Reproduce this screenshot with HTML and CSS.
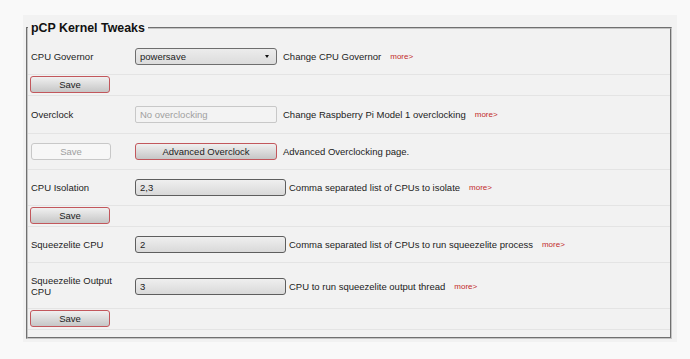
FILE: index.html
```html
<!DOCTYPE html>
<html>
	<head>
		<meta charset="UTF-8">
		<title>pCP Kernel Tweaks</title>
		<link rel="stylesheet" href="styles.css">
	</head>
	<body>
		<div class="panel">
			<fieldset class="tweaks">
				<legend>pCP Kernel Tweaks</legend>

				<div class="row">
					<div class="label">CPU Governor</div>
					<div class="select"><span>powersave</span><i class="arrow"></i></div>
					<span class="desc">Change CPU Governor</span>
					<a class="more" href="###">more&gt;</a>
				</div>
				<div class="row row-save">
					<button class="btn">Save</button>
				</div>

				<div class="row row-mid">
					<div class="label">Overclock</div>
					<input class="txt txt-short" type="text" value="No overclocking" disabled>
					<span class="desc">Change Raspberry Pi Model 1 overclocking</span>
					<a class="more" href="###">more&gt;</a>
				</div>
				<div class="row">
					<div class="label"><button class="btn" disabled>Save</button></div>
					<button class="btn btn-wide">Advanced Overclock</button>
					<span class="desc">Advanced Overclocking page.</span>
				</div>

				<div class="row">
					<div class="label">CPU Isolation</div>
					<input class="txt" type="text" value="2,3">
					<span class="desc">Comma separated list of CPUs to isolate</span>
					<a class="more" href="###">more&gt;</a>
				</div>
				<div class="row row-save">
					<button class="btn">Save</button>
				</div>

				<div class="row">
					<div class="label">Squeezelite CPU</div>
					<input class="txt" type="text" value="2">
					<span class="desc">Comma separated list of CPUs to run squeezelite process</span>
					<a class="more" href="###">more&gt;</a>
				</div>
				<div class="row row-tall">
					<div class="label">Squeezelite Output CPU</div>
					<input class="txt" type="text" value="3">
					<span class="desc">CPU to run squeezelite output thread</span>
					<a class="more" href="###">more&gt;</a>
				</div>
				<div class="row row-save">
					<button class="btn">Save</button>
				</div>
			</fieldset>
		</div>
	</body>
</html>
```

FILE: styles.css
```css
*{
	margin: 0;
	padding: 0;
	box-sizing: border-box;
}
body{
	background-color: #f9f9f9;
	font-family: "Liberation Sans", Arial, sans-serif;
	font-size: 9.5px;
	color: #222;
	padding: 15px 0 0 23px;
}
.panel{
	width: 654px;
	background-color: #f2f2f2;
	padding: 6px 5px 3px 3px;
}
.tweaks{
	border: 2px groove #c4c4c4;
	padding: 4px 0 7px 0;
}
.tweaks legend{
	font-size: 12.4px;
	font-weight: bold;
	color: #111;
	padding: 0 3px;
	line-height: 14px;
}
.row{
	display: flex;
	align-items: center;
	padding: 9px 2px;
	border-bottom: 1px solid #e4e4e4;
}
.row-save{
	padding: 1px 2px 2px;
}
.row-mid{
	padding: 10px 2px;
}
.row-tall{
	padding: 12px 2px 11px;
}
.label{
	width: 105px;
	flex-shrink: 0;
	padding-left: 1px;
	padding-right: 4px;
	line-height: 11px;
}

/* select box */
.select{
	width: 142px;
	height: 17px;
	display: flex;
	align-items: center;
	justify-content: space-between;
	padding: 0 7px 0 4px;
	border: 1px solid #6e6e6e;
	border-radius: 3px;
	background: linear-gradient(#ececec, #dcdcdc);
	margin-right: 6px;
}
.arrow{
	width: 0;
	height: 0;
	border-left: 2.5px solid transparent;
	border-right: 2.5px solid transparent;
	border-top: 3px solid #111;
}

/* text inputs */
.txt{
	width: 151px;
	height: 17px;
	padding: 0 4px;
	font-family: inherit;
	font-size: 9.5px;
	color: #222;
	border: 1px solid #5e5e5e;
	border-radius: 3px;
	background: linear-gradient(#efefef, #d9d9d9);
	margin-right: 3px;
	outline: none;
}
.txt:disabled{
	border-color: #c8c8c8;
	background: #f3f3f3;
	color: #a0a0a0;
	border-radius: 2px;
}
.txt-short{
	width: 142px;
	margin-right: 6px;
}

/* buttons */
.btn{
	width: 80px;
	height: 17px;
	font-family: inherit;
	font-size: 9.5px;
	color: #222;
	border: 1px solid #c2575c;
	border-radius: 3px;
	background: linear-gradient(#f0f0f0, #c6c6c6);
}
.btn:disabled{
	border-color: #c8c8c8;
	background: #f7f7f7;
	color: #a0a0a0;
}
.btn-wide{
	width: 142px;
	margin-right: 6px;
}
.desc{
	white-space: nowrap;
}
.more{
	margin-left: 9px;
	font-size: 8px;
	color: #c22a2a;
	text-decoration: none;
}
```
